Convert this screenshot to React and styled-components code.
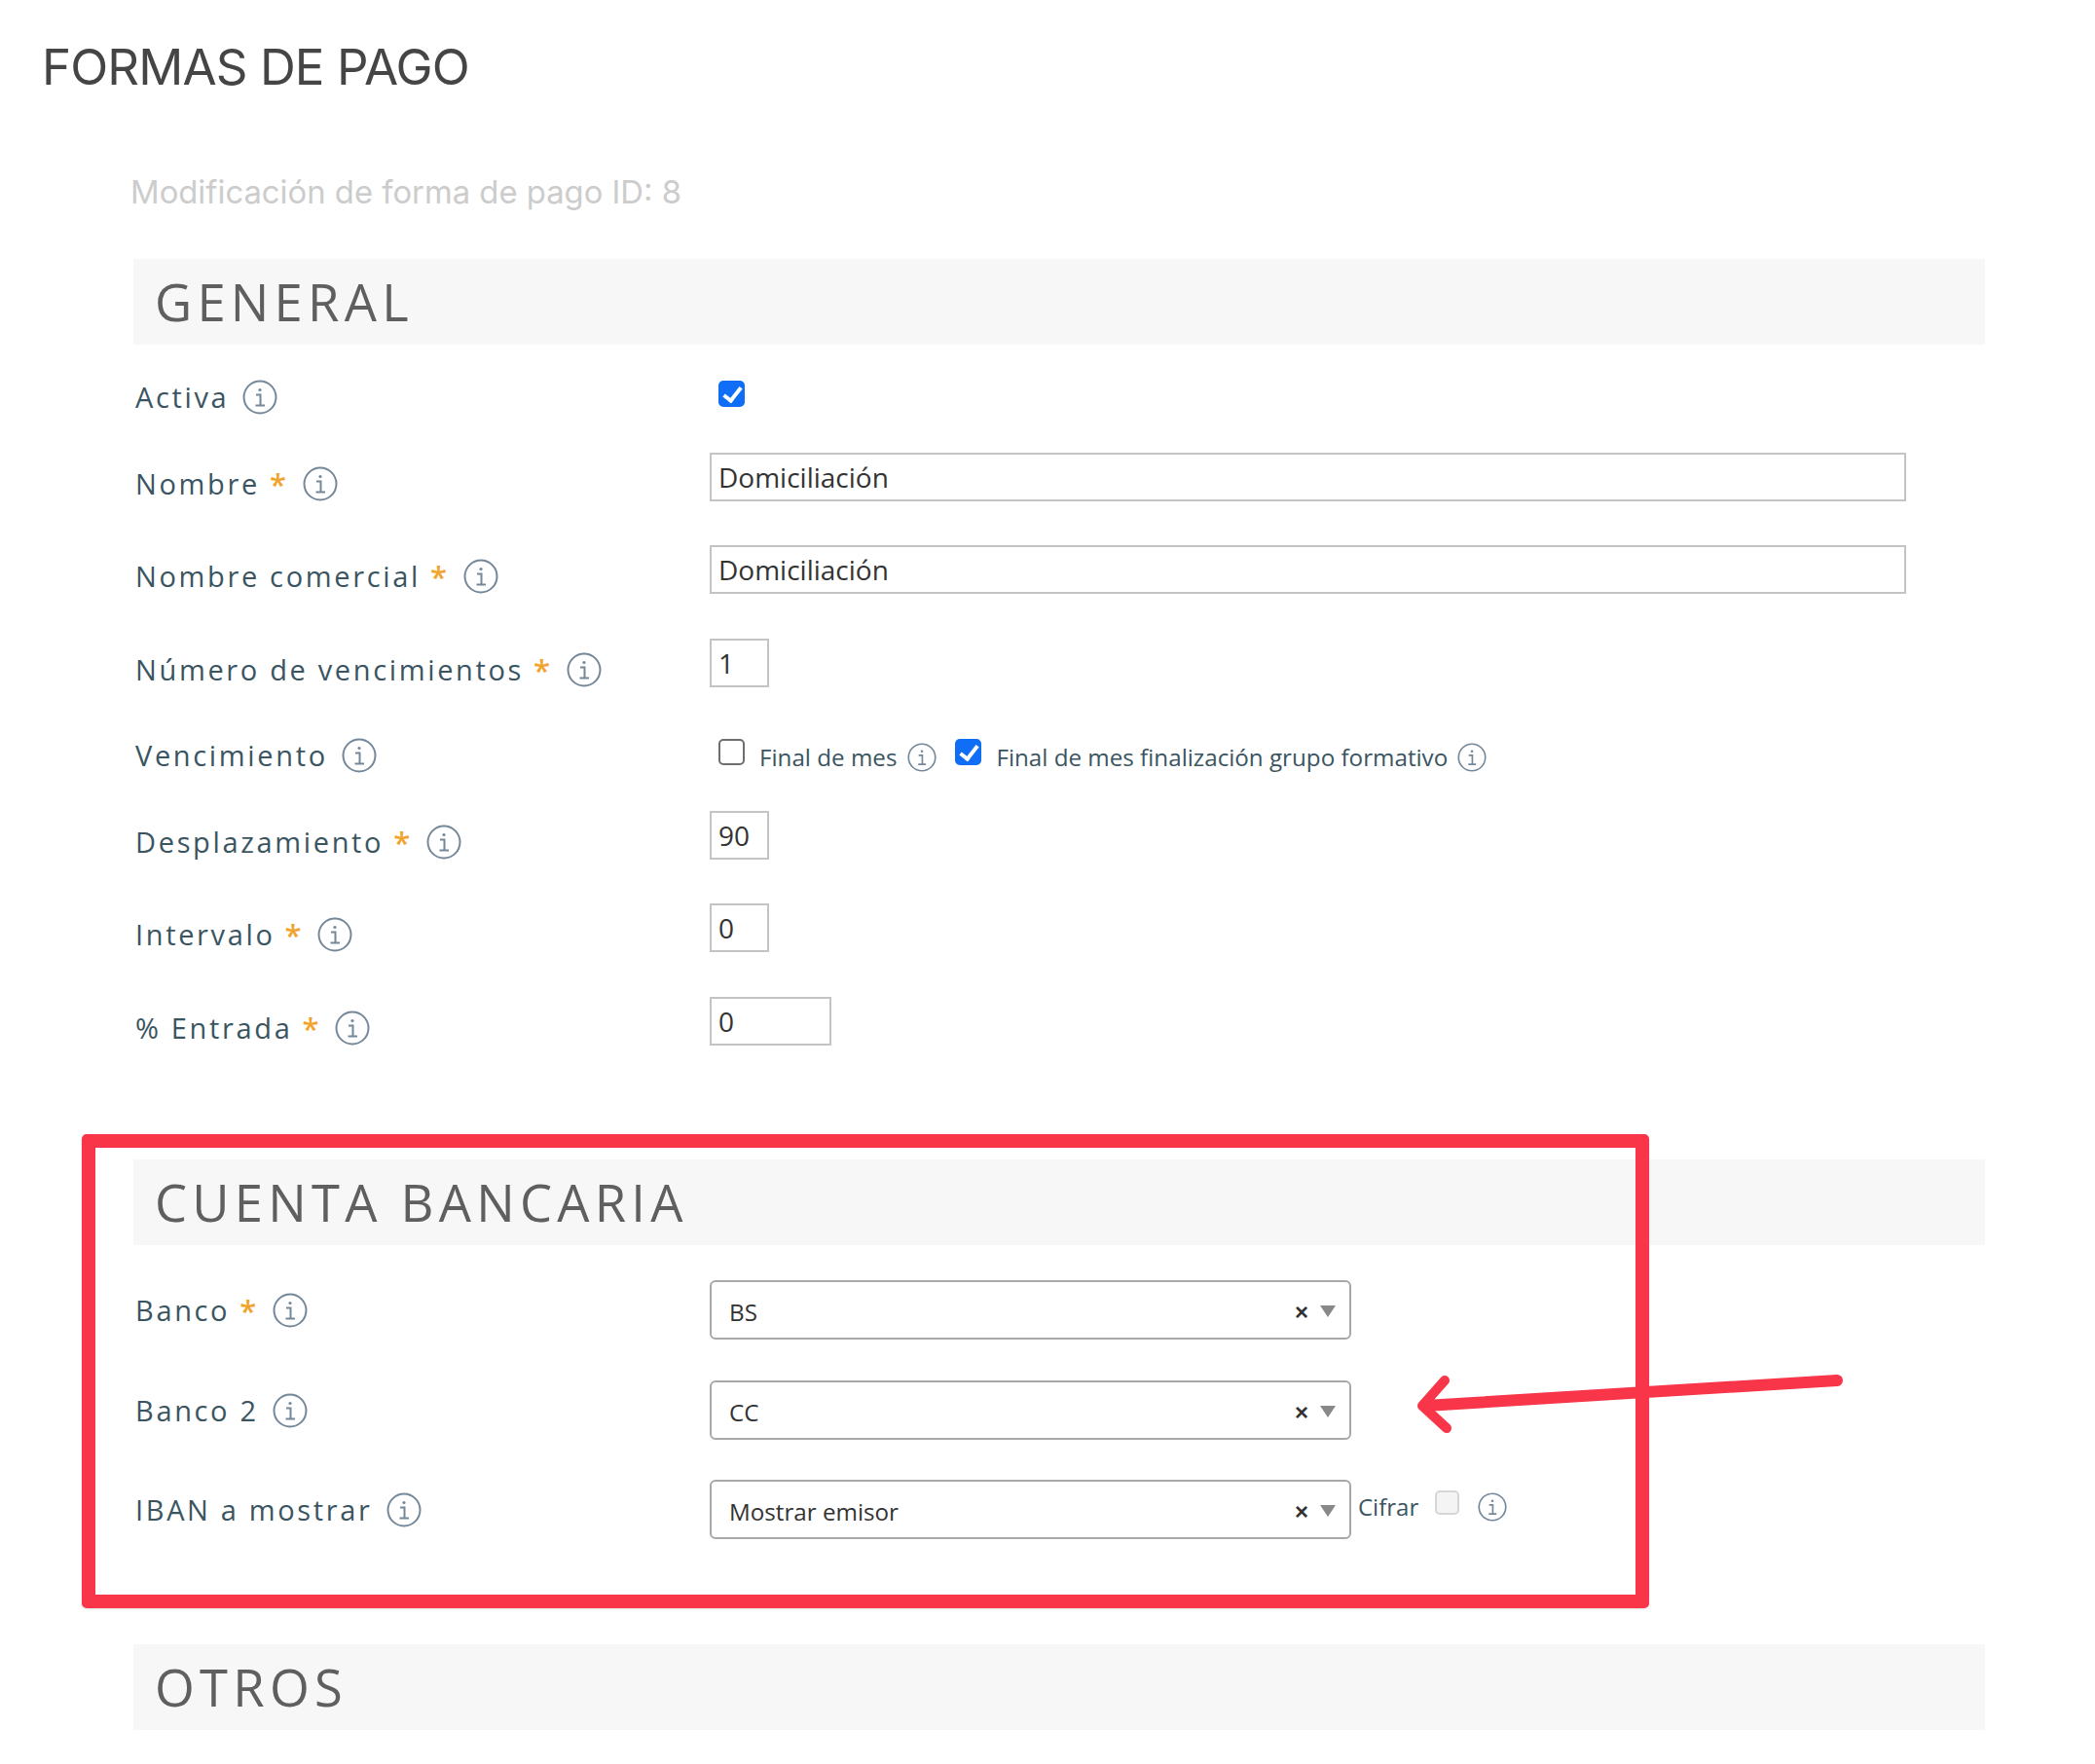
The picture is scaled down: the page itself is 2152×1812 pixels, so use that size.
import React from 'react'
import styled, { createGlobalStyle } from 'styled-components'

const GlobalStyle = createGlobalStyle`
  html, body {
    margin: 0;
    padding: 0;
    background: #fff;
  }
  body {
    font-family: "Open Sans", "Liberation Sans", sans-serif;
  }
`

const Page = styled.div`
  position: relative;
  width: 2152px;
  height: 1812px;
  overflow: hidden;
  background: #fff;
`
const Title = styled.h1`
  box-sizing: border-box;
  margin: 0;
  padding: 38px 0 0 43px;
  height: 100px;
  font-family: Inter, "Liberation Sans", sans-serif;
  font-weight: 400;
  font-size: 51px;
  line-height: 62px;
  letter-spacing: -0.9px;
  color: #454545;
`
const Content = styled.div`
  padding-left: 137px;
  width: 1902px;
`
const Subtitle = styled.h2`
  box-sizing: border-box;
  margin: 0 0 0 -3px;
  padding-top: 75px;
  height: 166px;
  font-family: Inter, "Liberation Sans", sans-serif;
  font-weight: 400;
  font-size: 32.8px;
  line-height: 44px;
  color: #cccccc;
`
const SectionBar = styled.div`
  box-sizing: border-box;
  height: 88px;
  padding-left: 22px;
  background: #f7f7f7;
  font-size: 52.5px;
  line-height: 88px;
  letter-spacing: 5.25px;
  color: #5f5f5f;
`
const Rows = styled.div`
  padding-top: ${props => props.$top}px;
`
const Row = styled.div`
  display: grid;
  grid-template-columns: 592px 1fr;
  height: ${props => props.$h}px;
`
const Label = styled.div`
  display: flex;
  align-items: center;
  padding: ${props => (props.$tight ? 11 : 12)}px 0 0 2px;
  height: 40px;
  font-size: 29px;
  line-height: 40px;
  letter-spacing: 2.65px;
  color: #3a5561;
  white-space: nowrap;
`
const Star = styled.span`
  margin-left: 10px;
  font-size: 31px;
  color: #f0a42e;
  font-weight: 600;
`
const InfoWrap = styled.span`
  display: inline-flex;
  margin-left: ${props => props.$gap || 14}px;
  margin-top: ${props => props.$dy || 0}px;
`
const TextInput = styled.input`
  display: block;
  box-sizing: border-box;
  width: ${props => props.$w}px;
  height: 50px;
  padding: 0 7px;
  border: 2px solid #c4c4c4;
  border-radius: 0;
  outline: none;
  background: #fff;
  font-family: "Open Sans", sans-serif;
  font-size: 28px;
  color: #333;
`
const Inline = styled.div`
  display: flex;
  align-items: flex-start;
  padding: ${props => props.$top || 0}px 0 0 9px;
`
const Check = styled.input`
  appearance: none;
  position: relative;
  flex: none;
  box-sizing: border-box;
  width: 27px;
  height: 27px;
  margin: 0;
  background: #fff;
  border: 2px solid #6e6e6e;
  border-radius: 5px;
  &:checked {
    background: #0f6ef5;
    border-color: #0f6ef5;
  }
  &:checked::after {
    content: '';
    position: absolute;
    left: 7px;
    top: 1px;
    width: 7px;
    height: 15px;
    border-right: 4px solid #fff;
    border-bottom: 4px solid #fff;
    transform: rotate(38deg);
  }
  &:disabled {
    background: #f4f4f4;
    border-color: #d6d6d6;
  }
`
const CheckText = styled.span`
  margin-left: 15px;
  font-size: 24.2px;
  line-height: 34px;
  color: #3a5561;
  white-space: nowrap;
  padding-top: 2px;
`
const Second = styled.div`
  display: flex;
  align-items: flex-start;
  margin-left: 19px;
`
const SelectBox = styled.div`
  display: flex;
  align-items: center;
  flex: none;
  box-sizing: border-box;
  width: 659px;
  height: 61px;
  padding: 4px 14px 0 18px;
  border: 2px solid #a8a8a8;
  border-radius: 6px;
  font-size: 24.2px;
  color: #333;
`
const SelectValue = styled.span`
  flex: 1;
`
const Clear = styled.span`
  font-family: "Liberation Sans", sans-serif;
  font-weight: 700;
  font-size: 24px;
  line-height: 24px;
  color: #333;
  margin-right: 12px;
`
const Arrow = styled.span`
  width: 0;
  height: 0;
  margin-top: -2px;
  border-left: 8px solid transparent;
  border-right: 8px solid transparent;
  border-top: 12px solid #888;
`
const SelectRow = styled.div`
  display: flex;
  align-items: flex-start;
`
const Cifrar = styled.span`
  margin: 11px 17px 0 7px;
  font-size: 24px;
  line-height: 34px;
  color: #3a5561;
`
const MutedCheck = styled(Check)`
  margin-top: 11px;
  margin-right: 0;
  width: 25px;
  height: 25px;
`
const RedFrame = styled.div`
  position: absolute;
  left: 84px;
  top: 1165px;
  width: 1610px;
  height: 487px;
  box-sizing: border-box;
  border: 14px solid #f93549;
  border-radius: 5px;
  box-shadow: 0 1px 3px rgba(0, 0, 0, 0.12);
  pointer-events: none;
`
const RedArrow = styled.svg`
  position: absolute;
  left: 1440px;
  top: 1400px;
  pointer-events: none;
`

const Info = ({ size = 36 }) => (
  <svg width={size} height={size} viewBox="0 0 36 36" fill="none" stroke="#74889a">
    <circle cx="18" cy="18" r="16.5" strokeWidth="2" />
    <circle cx="18" cy="10.5" r="1.6" fill="#74889a" stroke="none" />
    <path d="M14 15.5h4.5v11M13.5 26.5h9.5" strokeWidth="2" />
  </svg>
)

const Field = ({ label, required, children, h, tight }) => (
  <Row $h={h}>
    <Label $tight={tight}>
      {label}
      {required && <Star>*</Star>}
      <InfoWrap>
        <Info />
      </InfoWrap>
    </Label>
    <div>{children}</div>
  </Row>
)

const BankSelect = ({ value }) => (
  <SelectBox>
    <SelectValue>{value}</SelectValue>
    <Clear>×</Clear>
    <Arrow />
  </SelectBox>
)

const App = () => (
  <Page>
    <GlobalStyle />
    <Title>FORMAS DE PAGO</Title>
    <Content>
      <Subtitle>Modificación de forma de pago ID: 8</Subtitle>
      <SectionBar>GENERAL</SectionBar>
      <Rows $top={23}>
        <Field label="Activa" h={88} tight>
          <Inline $top={14}>
            <Check type="checkbox" defaultChecked />
          </Inline>
        </Field>
        <Field label="Nombre" required h={95}>
          <TextInput $w={1229} defaultValue="Domiciliación" />
        </Field>
        <Field label="Nombre comercial" required h={96}>
          <TextInput $w={1229} defaultValue="Domiciliación" />
        </Field>
        <Field label="Número de vencimientos" required h={88}>
          <TextInput $w={61} defaultValue="1" />
        </Field>
        <Field label="Vencimiento" h={89}>
          <Inline $top={15}>
            <Check type="checkbox" />
            <CheckText>Final de mes</CheckText>
            <InfoWrap $gap={11} $dy={4}>
              <Info size={30} />
            </InfoWrap>
            <Second>
              <Check type="checkbox" defaultChecked />
              <CheckText>Final de mes finalización grupo formativo</CheckText>
              <InfoWrap $gap={10} $dy={4}>
                <Info size={30} />
              </InfoWrap>
            </Second>
          </Inline>
        </Field>
        <Field label="Desplazamiento" required h={95}>
          <TextInput $w={61} defaultValue="90" />
        </Field>
        <Field label="Intervalo" required h={96}>
          <TextInput $w={61} defaultValue="0" />
        </Field>
        <Field label="% Entrada" required h={167}>
          <TextInput $w={125} defaultValue="0" />
        </Field>
      </Rows>
      <SectionBar>CUENTA BANCARIA</SectionBar>
      <Rows $top={36}>
        <Field label="Banco" required h={103} tight>
          <BankSelect value="BS" />
        </Field>
        <Field label="Banco 2" h={102} tight>
          <BankSelect value="CC" />
        </Field>
        <Field label="IBAN a mostrar" h={169} tight>
          <SelectRow>
            <BankSelect value="Mostrar emisor" />
            <Cifrar>Cifrar</Cifrar>
            <MutedCheck type="checkbox" disabled />
            <InfoWrap $gap={19} $dy={13}>
              <Info size={30} />
            </InfoWrap>
          </SelectRow>
        </Field>
      </Rows>
      <SectionBar>OTROS</SectionBar>
    </Content>
    <RedFrame />
    <RedArrow width="460" height="80" viewBox="0 0 460 80" fill="none">
      <path d="M447 18L24 44" stroke="#f93549" strokeWidth="12" strokeLinecap="round" />
      <path
        d="M44 18L21 44L46 67"
        stroke="#f93549"
        strokeWidth="10"
        strokeLinecap="round"
        strokeLinejoin="round"
      />
    </RedArrow>
  </Page>
)

export default App
